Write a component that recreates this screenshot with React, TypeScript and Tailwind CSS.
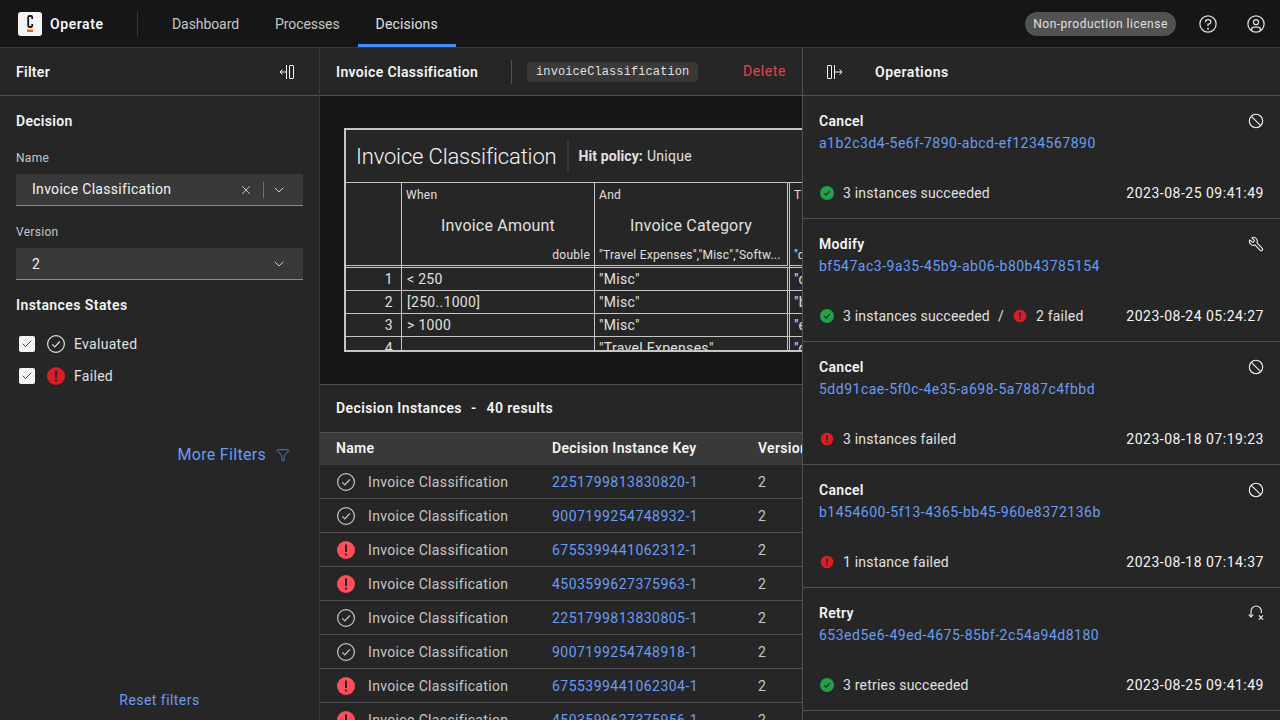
import * as React from 'react';
import { ChevronDown, Filter, X, Check, Wrench } from 'lucide-react';

const linkColor = 'text-[#6a9cf5]';

function HelpIcon() {
  return (
    <svg viewBox="0 0 32 32" className="w-5 h-5" fill="#e0e0e0">
      <path d="M16,2A14,14,0,1,0,30,16,14,14,0,0,0,16,2Zm0,26A12,12,0,1,1,28,16,12,12,0,0,1,16,28Z" />
      <circle cx="16" cy="23.5" r="1.5" />
      <path d="M17,8H15.5A4.49,4.49,0,0,0,11,12.5V13h2v-.5A2.5,2.5,0,0,1,15.5,10H17a2.5,2.5,0,0,1,0,5H15v4.5h2V17a4.5,4.5,0,0,0,0-9Z" />
    </svg>
  );
}

function UserIcon() {
  return (
    <svg viewBox="0 0 32 32" className="w-5 h-5" fill="#e0e0e0">
      <path d="M16,8a5,5,0,1,0,5,5A5,5,0,0,0,16,8Zm0,8a3,3,0,1,1,3-3A3.0034,3.0034,0,0,1,16,16Z" />
      <path d="M16,2A14,14,0,1,0,30,16,14.0158,14.0158,0,0,0,16,2ZM10,26.3765V25a3.0033,3.0033,0,0,1,3-3h6a3.0033,3.0033,0,0,1,3,3v1.3765a11.8989,11.8989,0,0,1-12,0Zm13.9925-1.4507A5.0016,5.0016,0,0,0,19,20H13a5.0016,5.0016,0,0,0-4.9925,4.9258,12,12,0,1,1,15.985,0Z" />
    </svg>
  );
}

function Logo() {
  return (
    <div className="w-6 h-6 rounded-[3px] bg-[#f4f4f4] shrink-0">
      <svg viewBox="0 0 24 24" className="w-6 h-6">
        <path d="M14.2 7V5.2a1.2 1.2 0 0 0-1.2-1.2h-1.6a1.2 1.2 0 0 0-1.2 1.2v8.6a1.2 1.2 0 0 0 1.2 1.2H13a1.2 1.2 0 0 0 1.2-1.2V12" fill="none" stroke="#161616" strokeWidth="1.8" />
        <rect x="9" y="17.5" width="6" height="2.5" fill="#fc5d0d" />
      </svg>
    </div>
  );
}

function PanelCollapseLeft() {
  return (
    <svg viewBox="0 0 16 16" className="w-4 h-4" fill="none" stroke="#f4f4f4" strokeWidth="1">
      <rect x="10.5" y="1.5" width="4" height="13" rx="0.5" />
      <path d="M7.5 1v14" />
      <path d="M1 8h6.5" />
      <path d="M3.5 5.5 1 8l2.5 2.5" />
    </svg>
  );
}

function PanelCollapseRight() {
  return (
    <svg viewBox="0 0 16 16" className="w-4 h-4" fill="none" stroke="#f4f4f4" strokeWidth="1">
      <rect x="0.5" y="1.5" width="4" height="13" rx="0.5" />
      <path d="M7.5 1v14" />
      <path d="M8 8h7" />
      <path d="M12.5 5.5 15 8l-2.5 2.5" />
    </svg>
  );
}

function EvaluatedIcon({ color = '#e0e0e0' }: { color?: string }) {
  return (
    <svg viewBox="0 0 20 20" className="w-5 h-5" fill="none" stroke={color}>
      <circle cx="10" cy="10" r="8.4" strokeWidth="1.2" />
      <path d="M6.3 10.3 8.8 12.8 13.8 7.5" strokeWidth="1.2" />
    </svg>
  );
}

function ErrorIcon({ color }: { color: string }) {
  return (
    <svg viewBox="0 0 20 20" className="w-full h-full">
      <circle cx="10" cy="10" r="9" fill={color} />
      <rect x="9" y="4.5" width="2" height="7.5" fill="#262626" />
      <rect x="9" y="13.5" width="2" height="2" fill="#262626" />
    </svg>
  );
}

function SuccessDot() {
  return (
    <svg viewBox="0 0 14 14" className="w-3.5 h-3.5">
      <circle cx="7" cy="7" r="7" fill="#24a148" />
      <path d="M4.2 7.2 6.1 9.1 9.9 5.2" fill="none" stroke="#262626" strokeWidth="1.2" />
    </svg>
  );
}

function CancelIcon() {
  return (
    <svg viewBox="0 0 16 16" className="w-4 h-4" fill="none" stroke="#f4f4f4" strokeWidth="1.1">
      <circle cx="8" cy="8" r="6.7" />
      <path d="M3.3 3.3 12.7 12.7" />
    </svg>
  );
}

function ModifyIcon() {
  return <Wrench size={16} color="#f4f4f4" strokeWidth={1.6} className="-scale-x-100" />;
}

function RetryIcon() {
  return (
    <svg viewBox="0 0 16 16" className="w-4 h-4" fill="none" stroke="#f4f4f4" strokeWidth="1.1">
      <path d="M3 11.5V6.2a5.2 5.2 0 0 1 10.4 0V8" />
      <path d="M0.8 9.6 3 12 5.2 9.6" />
      <path d="M10.8 10.4 15 14.6M15 10.4 10.8 14.6" />
    </svg>
  );
}

function CheckBox() {
  return (
    <div className="w-4 h-4 rounded-[2px] bg-[#f4f4f4] flex items-center justify-center">
      <Check size={12} color="#161616" strokeWidth={1.5} />
    </div>
  );
}

function TopBar() {
  const tabs = [
    { name: 'Dashboard', active: false },
    { name: 'Processes', active: false },
    { name: 'Decisions', active: true },
  ];
  return (
    <header className="h-12 flex items-center bg-[#161616] border-b border-[#393939] shrink-0">
      <div className="flex items-center gap-2 pl-[18px] w-[138px] h-6 border-r border-[#393939]">
        <Logo />
        <span className="pt-px text-[14px] font-semibold text-[#f4f4f4] tracking-[0.55px]">Operate</span>
      </div>
      <nav className="flex ml-4 h-full tracking-[-0.08px]">
        {tabs.map((t) => (
          <div
            key={t.name}
            className={`px-[18px] pt-[2px] flex items-center h-[47px] text-[14px] border-y-[3px] border-t-transparent ${
              t.active ? 'border-b-[#4589ff] text-[#e0e0e0] tracking-[0.15px]' : 'border-b-transparent text-[#c6c6c6]'
            }`}
          >
            {t.name}
          </div>
        ))}
      </nav>
      <div className="ml-auto flex items-center">
        <div className="h-6 w-[151px] pt-px rounded-full bg-[#525252] flex items-center justify-center text-[12px] text-[#e0e0e0] mr-2 tracking-[0.5px]">
          Non-production license
        </div>
        <div className="w-12 h-12 flex items-center justify-center"><HelpIcon /></div>
        <div className="w-12 h-12 flex items-center justify-center"><UserIcon /></div>
      </div>
    </header>
  );
}

function SelectBox({ value, clearable }: { value: string; clearable?: boolean }) {
  return (
    <div className="h-8 bg-[#393939] border-b border-[#8d8d8d] flex items-center pl-4 pr-4 text-[14px] text-[#f4f4f4]">
      <span className={clearable ? '' : 'pt-[2px]'}>{value}</span>
      <div className="ml-auto flex items-center">
        {clearable && (
          <>
            <X size={14} color="#f4f4f4" strokeWidth={1.3} />
            <div className="w-px h-4 bg-[#6f6f6f] ml-[10px] mr-[7px]" />
          </>
        )}
        <ChevronDown size={16} color="#f4f4f4" strokeWidth={1.2} />
      </div>
    </div>
  );
}

function FilterPanel() {
  return (
    <aside className="w-[320px] shrink-0 flex flex-col bg-[#262626] border-r border-[#393939]">
      <div className="h-12 flex items-center justify-between pl-4 pr-6 border-b border-[#525252] shrink-0">
        <span className="pt-px text-[14px] font-semibold text-[#f4f4f4]">Filter</span>
        <PanelCollapseLeft />
      </div>
      <div className="px-4 flex flex-col flex-1">
        <div className="mt-[15px] text-[14px] leading-5 font-semibold text-[#f4f4f4]">Decision</div>
        <div className="mt-[19px] mb-2 text-[12px] leading-4 text-[#c6c6c6]">Name</div>
        <SelectBox value="Invoice Classification" clearable />
        <div className="mt-[18px] mb-2 text-[12px] leading-4 text-[#c6c6c6]">Version</div>
        <SelectBox value="2" />
        <div className="mt-[15px] text-[14px] leading-5 font-semibold text-[#f4f4f4] tracking-[0.42px]">Instances States</div>
        <div className="mt-[19px] flex items-center h-5 pl-[3px]">
          <CheckBox />
          <div className="ml-[11px]"><EvaluatedIcon /></div>
          <span className="ml-2 text-[14px] text-[#e0e0e0]">Evaluated</span>
        </div>
        <div className="mt-3 flex items-center h-5 pl-[3px]">
          <CheckBox />
          <div className="ml-[11px] w-5 h-5"><ErrorIcon color="#da1e28" /></div>
          <span className="ml-2 text-[14px] text-[#e0e0e0]">Failed</span>
        </div>
        <div className={`mt-[57px] flex items-center justify-end gap-[10px] pr-[13px] text-[16px] ${linkColor}`}>
          <span>More Filters</span>
          <Filter size={14} strokeWidth={1.2} />
        </div>
        <div className={`mt-auto mb-[9px] text-center text-[14px] tracking-[0.45px] ${linkColor}`}>Reset filters</div>
      </div>
    </aside>
  );
}

const dmnRows = [
  ['1', '< 250', '"Misc"', '"day-to-day expense"'],
  ['2', '[250..1000]', '"Misc"', '"budget"'],
  ['3', '> 1000', '"Misc"', '"exceptional"'],
  ['4', '', '"Travel Expenses"', '"day-to-day expense"'],
];

function DmnTable() {
  return (
    <div className="w-[640px] h-[224px] border-2 border-[#c6c6c6] overflow-hidden bg-[#262626] text-[#e0e0e0]">
      <div className="h-[53px] border-b border-[#c6c6c6] flex items-center pl-[10px]">
        <span className="pt-px text-[22px] font-light text-[#f4f4f4] tracking-[-0.15px]">Invoice Classification</span>
        <div className="w-0.5 h-8 bg-[#393939] mx-[10px]" />
        <span className="pt-px text-[14px] font-bold tracking-[0.1px]">Hit policy:</span>
        <span className="pt-px text-[14px] ml-1">Unique</span>
      </div>
      <table className="table-fixed border-separate border-spacing-0 w-[640px]">
        <colgroup>
          <col className="w-[56px]" />
          <col className="w-[193px]" />
          <col className="w-[195px]" />
          <col className="w-[196px]" />
        </colgroup>
        <thead>
          <tr className="h-[85px]">
            <th className="border-r border-b-[3px] border-double border-[#c6c6c6]" />
            <HeaderCell kind="When" title="Invoice Amount" sub="double" right />
            <HeaderCell kind="And" title="Invoice Category" sub={'"Travel Expenses","Misc","Softw...'} />
            <HeaderCell kind="Then" title="Classification" sub={'"day-to-day expense","budget"'} />
          </tr>
        </thead>
        <tbody>
          {dmnRows.map((r) => (
            <tr key={r[0]} className="h-[23px] text-[14px] leading-[22px]">
              <td className="border-r border-b border-[#c6c6c6] text-right pr-[8px]">{r[0]}</td>
              <td className="border-r border-b border-[#c6c6c6] pl-[5px]">{r[1]}</td>
              <td className="border-r-[3px] border-b border-double border-[#c6c6c6] pl-[4px]">{r[2]}</td>
              <td className="border-r border-b border-[#c6c6c6] pl-[4px]">{r[3]}</td>
            </tr>
          ))}
        </tbody>
      </table>
    </div>
  );
}

function HeaderCell({ kind, title, sub, right }: { kind: string; title: string; sub: string; right?: boolean }) {
  return (
    <th className={`p-0 font-normal align-top border-b-[3px] border-double border-[#c6c6c6] ${kind === 'And' ? 'border-r-[3px]' : 'border-r'}`}>
      <div className="flex flex-col h-[82px] px-[4px]">
        <div className="text-left text-[12px] leading-4 mt-1">{kind}</div>
        <div className="text-center text-[16px] leading-5 mt-[13px] text-[#e0e0e0] tracking-[0.2px]">{title}</div>
        <div className={`mt-[11px] text-[12px] leading-4 tracking-[0.23px] whitespace-nowrap overflow-hidden ${right ? 'text-right' : 'text-left'}`}>{sub}</div>
      </div>
    </th>
  );
}

const instances = [
  { key: '2251799813830820-1', failed: false },
  { key: '9007199254748932-1', failed: false },
  { key: '6755399441062312-1', failed: true },
  { key: '4503599627375963-1', failed: true },
  { key: '2251799813830805-1', failed: false },
  { key: '9007199254748918-1', failed: false },
  { key: '6755399441062304-1', failed: true },
  { key: '4503599627375956-1', failed: true },
];

function InstancesTable() {
  return (
    <div className="flex-1 min-h-0 bg-[#262626] overflow-hidden">
      <div className="h-[47px] flex items-center pl-4 text-[14px] font-semibold text-[#f4f4f4] tracking-[0.4px]">
        <span>Decision Instances</span>
        <span className="ml-[9px] mr-[10px]">-</span>
        <span>40 results</span>
      </div>
      <div className="h-[33px] pb-[2px] grid grid-cols-[216px_206px_100px] items-center pl-4 bg-[#393939] border-t border-[#525252] text-[14px] font-semibold text-[#f4f4f4] whitespace-nowrap">
        <span>Name</span>
        <span>Decision Instance Key</span>
        <span>Version</span>
      </div>
      {instances.map((row) => (
        <div key={row.key} className="h-[34px] pt-[2px] grid grid-cols-[216px_206px_100px] items-center pl-4 border-b border-[#525252] text-[14px] text-[#c6c6c6] tracking-[0.35px]">
          <div className="flex items-center gap-[12px]">
            <div className="w-5 h-5 -mt-[2px]">
              {row.failed ? <ErrorIcon color="#ff4d5b" /> : <EvaluatedIcon color="#c6c6c6" />}
            </div>
            <span>Invoice Classification</span>
          </div>
          <span className={`tracking-[0.47px] ${linkColor}`}>{row.key}</span>
          <span>2</span>
        </div>
      ))}
    </div>
  );
}

function DecisionPanel() {
  return (
    <main className="w-[482px] shrink-0 flex flex-col overflow-hidden">
      <div className="h-12 flex items-center pl-4 pr-4 bg-[#262626] border-b border-[#525252] shrink-0">
        <span className="pt-px text-[14px] font-semibold text-[#f4f4f4] tracking-[0.35px]">Invoice Classification</span>
        <div className="w-px h-6 bg-[#525252] ml-[33px] mr-[15px]" />
        <span className="h-5 w-[171px] flex items-center justify-center rounded bg-[#393939] text-[12px] text-[#e0e0e0] tracking-[0.1px] font-['Liberation_Mono',monospace]">
          invoiceClassification
        </span>
        <span className="ml-auto text-[14px] text-[#e5414d] tracking-[0.6px]">Delete</span>
      </div>
      <div className="h-[289px] bg-[#161616] border-b border-[#525252] pt-8 pl-6 shrink-0 overflow-hidden">
        <DmnTable />
      </div>
      <InstancesTable />
    </main>
  );
}

const operations = [
  { type: 'Cancel', id: 'a1b2c3d4-5e6f-7890-abcd-ef1234567890', ok: '3 instances succeeded', fail: '', date: '2023-08-25 09:41:49', icon: <CancelIcon /> },
  { type: 'Modify', id: 'bf547ac3-9a35-45b9-ab06-b80b43785154', ok: '3 instances succeeded', fail: '2 failed', date: '2023-08-24 05:24:27', icon: <ModifyIcon /> },
  { type: 'Cancel', id: '5dd91cae-5f0c-4e35-a698-5a7887c4fbbd', ok: '', fail: '3 instances failed', date: '2023-08-18 07:19:23', icon: <CancelIcon /> },
  { type: 'Cancel', id: 'b1454600-5f13-4365-bb45-960e8372136b', ok: '', fail: '1 instance failed', date: '2023-08-18 07:14:37', icon: <CancelIcon /> },
  { type: 'Retry', id: '653ed5e6-49ed-4675-85bf-2c54a94d8180', ok: '3 retries succeeded', fail: '', date: '2023-08-25 09:41:49', icon: <RetryIcon /> },
];

function OperationsPanel() {
  return (
    <aside className="w-[478px] shrink-0 flex flex-col bg-[#262626] border-l border-[#525252]">
      <div className="h-12 flex items-center pl-6 border-b border-[#525252] shrink-0">
        <PanelCollapseRight />
        <span className="ml-8 pt-px text-[14px] font-semibold text-[#f4f4f4] tracking-[0.5px]">Operations</span>
      </div>
      {operations.map((op) => (
        <div key={op.id} className="h-[123px] shrink-0 px-4 pt-[15px] border-b border-[#525252]">
          <div className="flex items-center justify-between h-5">
            <span className="text-[14px] font-semibold text-[#f4f4f4]">{op.type}</span>
            {op.icon}
          </div>
          <div className={`h-5 mt-[2px] text-[14px] leading-5 tracking-[0.5px] ${linkColor}`}>{op.id}</div>
          <div className="flex items-center h-5 mt-[30px] text-[14px] text-[#e0e0e0] tracking-[0.2px]">
            {op.ok && (
              <span className="flex items-center">
                <span className="ml-px mr-[9px]"><SuccessDot /></span>
                {op.ok}
              </span>
            )}
            {op.ok && op.fail && <span className="mx-2">/</span>}
            {op.fail && (
              <span className="flex items-center">
                <span className="w-3.5 h-3.5 ml-px mr-[9px]"><ErrorIcon color="#da1e28" /></span>
                {op.fail}
              </span>
            )}
            <span className="ml-auto text-[#f4f4f4] tracking-[0.5px]">{op.date}</span>
          </div>
        </div>
      ))}
    </aside>
  );
}

export default function App() {
  return (
    <div className="h-screen w-full flex flex-col overflow-hidden bg-[#161616] font-['Roboto',sans-serif] tracking-[0.3px]">
      <TopBar />
      <div className="flex flex-1 min-h-0">
        <FilterPanel />
        <DecisionPanel />
        <OperationsPanel />
      </div>
    </div>
  );
}
